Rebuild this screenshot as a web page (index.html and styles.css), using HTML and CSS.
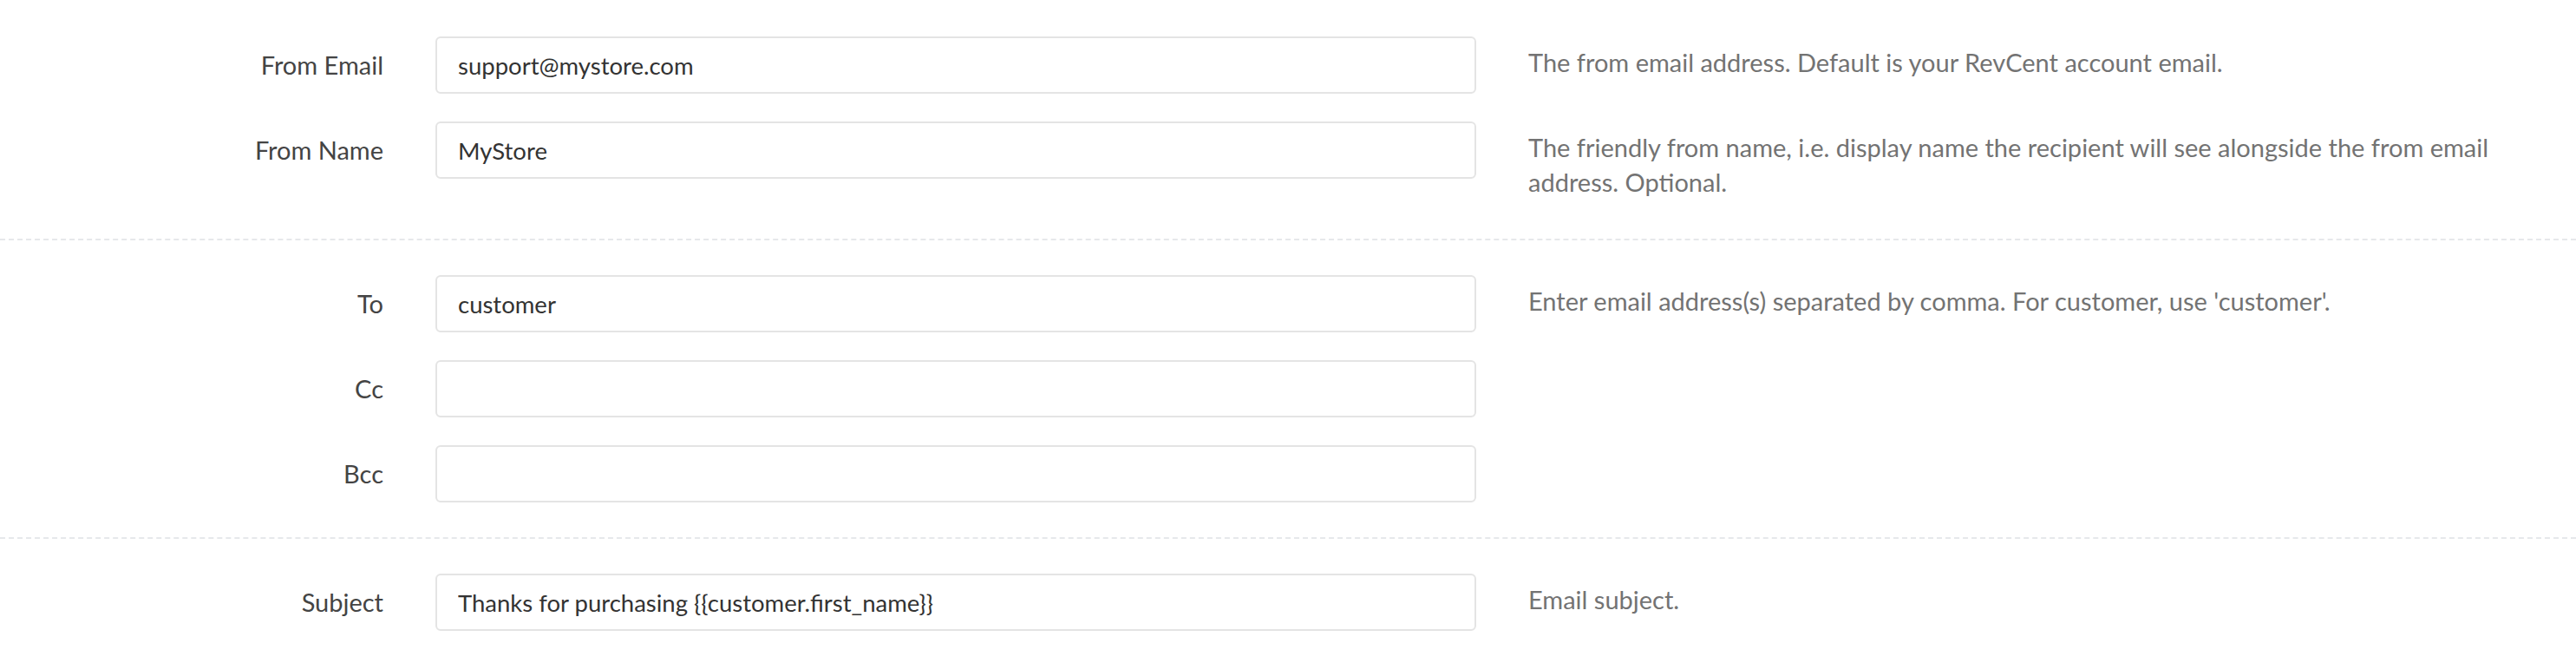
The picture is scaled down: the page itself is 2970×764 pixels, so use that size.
FILE: index.html
```html
<!DOCTYPE html>
<html lang="en">
<head>
    <meta charset="UTF-8">
    <meta name="viewport" content="width=device-width, initial-scale=1.0">
    <title>Email Settings</title>
    <link rel="stylesheet" href="styles.css">
</head>
<body>

    <form class="settings">
        <section class="group">
            <div class="field">
                <label class="field-label" for="from-email">From Email</label>
                <div class="field-control">
                    <input type="text" class="input" id="from-email" value="support@mystore.com">
                </div>
                <p class="field-help">The from email address. Default is your RevCent account email.</p>
            </div>
            <div class="field">
                <label class="field-label" for="from-name">From Name</label>
                <div class="field-control">
                    <input type="text" class="input" id="from-name" value="MyStore">
                </div>
                <p class="field-help">The friendly from name, i.e. display name the recipient will see alongside the from email address. Optional.</p>
            </div>
        </section>

        <section class="group">
            <div class="field">
                <label class="field-label" for="to">To</label>
                <div class="field-control">
                    <input type="text" class="input" id="to" value="customer">
                </div>
                <p class="field-help">Enter email address(s) separated by comma. For customer, use 'customer'.</p>
            </div>
            <div class="field">
                <label class="field-label" for="cc">Cc</label>
                <div class="field-control">
                    <input type="text" class="input" id="cc">
                </div>
            </div>
            <div class="field">
                <label class="field-label" for="bcc">Bcc</label>
                <div class="field-control">
                    <input type="text" class="input" id="bcc">
                </div>
            </div>
        </section>

        <section class="group">
            <div class="field">
                <label class="field-label" for="subject">Subject</label>
                <div class="field-control">
                    <input type="text" class="input" id="subject" value="Thanks for purchasing {{customer.first_name}}">
                </div>
                <p class="field-help">Email subject.</p>
            </div>
        </section>
    </form>

</body>
</html>
```

FILE: styles.css
```css
body {
    margin: 0;
    background-color: #fff;
    font-family: Lato, 'Open Sans', sans-serif;
    font-size: 29px;
    color: #333;
}

.settings {
    display: flex;
    flex-direction: column;
}

.group {
    display: flex;
    flex-direction: column;
    gap: 32px;
    padding: 40px 0;
    border-top: 2px dashed #e6e8eb;
}

.group:first-child {
    padding-top: 42px;
    border-top: none;
}

.field {
    display: grid;
    grid-template-columns: 472px 1260px 1fr;
    align-items: start;
}

.field-label {
    padding: 0 30px;
    line-height: 66px;
    text-align: right;
    color: #444;
}

.field-control {
    padding: 0 30px;
}

.input {
    display: block;
    box-sizing: border-box;
    width: 100%;
    height: 66px;
    padding: 0 24px;
    border: 2px solid #e4e4e4;
    border-radius: 6px;
    background-color: #fff;
    font-family: inherit;
    font-size: 27.5px;
    color: #333;
    outline: none;
}

.field-help {
    margin: 10px 0 5px;
    padding: 0 30px;
    line-height: 40px;
    color: #737373;
}
```
